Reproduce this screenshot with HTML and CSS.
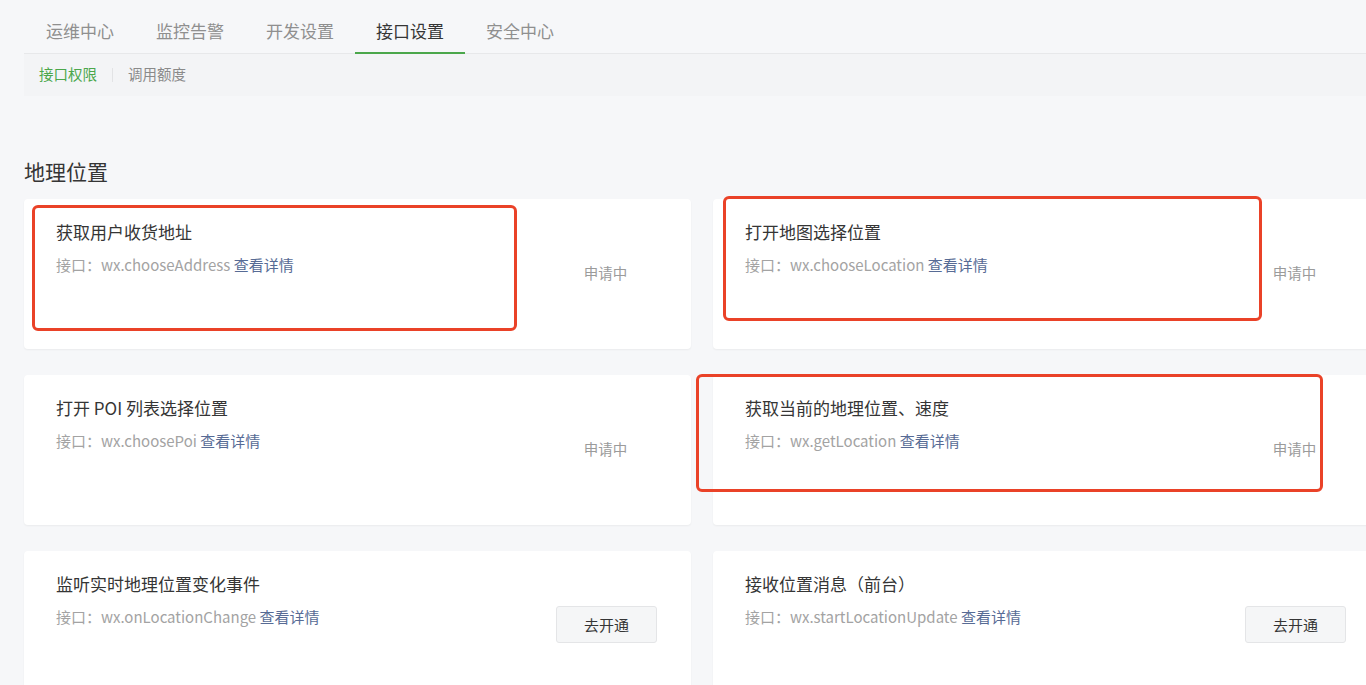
FILE: index.html
```html
<!DOCTYPE html>
<html lang="zh-CN">
<head>
<meta charset="utf-8">
<title>接口设置</title>
<link rel="stylesheet" href="styles.css">
</head>
<body>
<div class="page">
  <nav class="tabs">
    <a class="tab">运维中心</a>
    <a class="tab">监控告警</a>
    <a class="tab">开发设置</a>
    <a class="tab active">接口设置</a>
    <a class="tab">安全中心</a>
  </nav>
  <div class="subnav">
    <a class="sub active">接口权限</a>
    <span class="sep"></span>
    <a class="sub">调用额度</a>
  </div>
  <h2 class="section-title">地理位置</h2>
  <div class="grid">
    <div class="card">
      <div class="info">
        <div class="title">获取用户收货地址</div>
        <div class="desc">接口：wx.chooseAddress <a class="link">查看详情</a></div>
      </div>
      <div class="action"><span class="status">申请中</span></div>
    </div>
    <div class="card">
      <div class="info">
        <div class="title">打开地图选择位置</div>
        <div class="desc">接口：wx.chooseLocation <a class="link">查看详情</a></div>
      </div>
      <div class="action"><span class="status">申请中</span></div>
    </div>
    <div class="card">
      <div class="info">
        <div class="title">打开 POI 列表选择位置</div>
        <div class="desc">接口：wx.choosePoi <a class="link">查看详情</a></div>
      </div>
      <div class="action"><span class="status">申请中</span></div>
    </div>
    <div class="card">
      <div class="info">
        <div class="title">获取当前的地理位置、速度</div>
        <div class="desc">接口：wx.getLocation <a class="link">查看详情</a></div>
      </div>
      <div class="action"><span class="status">申请中</span></div>
    </div>
    <div class="card">
      <div class="info">
        <div class="title">监听实时地理位置变化事件</div>
        <div class="desc">接口：wx.onLocationChange <a class="link">查看详情</a></div>
      </div>
      <div class="action"><button class="btn">去开通</button></div>
    </div>
    <div class="card">
      <div class="info">
        <div class="title">接收位置消息（前台）</div>
        <div class="desc">接口：wx.startLocationUpdate <a class="link">查看详情</a></div>
      </div>
      <div class="action"><button class="btn">去开通</button></div>
    </div>
  </div>
  <div class="mark mark-1"></div>
  <div class="mark mark-2"></div>
  <div class="mark mark-3"></div>
</div>
</body>
</html>
```
FILE: styles.css
```css
html, body {
  margin: 0;
  padding: 0;
  background: #f6f7f9;
  overflow: hidden;
}
body {
  font-family: "Noto Sans CJK SC", "Noto Sans", sans-serif;
  color: #353535;
}
.page {
  position: relative;
  width: 1356px;
  padding-left: 24px;
  min-height: 685px;
}
.tabs {
  display: flex;
  height: 53px;
  border-bottom: 1px solid #e7e8ea;
}
.tab {
  width: 110px;
  text-align: center;
  font-size: 17px;
  line-height: 22px;
  padding-top: 20px;
  box-sizing: border-box;
  color: #8f8f8f;
  cursor: pointer;
}
.tab:first-child {
  margin-left: 1px;
}
.tab.active {
  color: #353535;
  border-bottom: 2px solid #4ba74b;
  margin-bottom: -1px;
}
.subnav {
  display: flex;
  align-items: center;
  height: 42px;
  background: #f3f4f6;
  padding-left: 15px;
}
.sub {
  font-size: 14.5px;
  line-height: 20px;
  color: #8a8a8a;
  margin-top: -2px;
}
.sub.active {
  color: #4ba74b;
}
.sep {
  width: 1px;
  height: 14px;
  background: #e2e3e5;
  margin: 0 15px;
}
.section-title {
  margin: 0;
  padding-top: 62px;
  padding-bottom: 2px;
  font-size: 21px;
  font-weight: normal;
  line-height: 26px;
  color: #353535;
}
.grid {
  display: grid;
  grid-template-columns: 667px 667px;
  column-gap: 22px;
  row-gap: 26px;
  margin-top: 13px;
}
.card {
  display: flex;
  height: 150px;
  background: #fff;
  border-radius: 4px;
  box-shadow: 0 1px 2px rgba(0, 0, 0, 0.05);
}
.info {
  flex: 1;
  padding: 22px 0 0 32px;
}
.title {
  font-size: 17px;
  line-height: 22px;
  color: #353535;
}
.desc {
  margin-top: 12px;
  font-size: 15px;
  line-height: 20px;
  color: #a3a3a3;
}
.link {
  color: #576b95;
  cursor: pointer;
}
.action {
  width: 101px;
  margin-right: 34px;
  padding-bottom: 3px;
  display: flex;
  align-items: center;
  justify-content: center;
}
.status {
  font-size: 14.5px;
  color: #9b9b9b;
  margin-left: -2px;
}
.btn {
  width: 101px;
  height: 37px;
  font-family: inherit;
  font-size: 15px;
  color: #353535;
  background: #f5f6f7;
  border: 1px solid #e4e5e7;
  border-radius: 3px;
  cursor: pointer;
}
.mark {
  position: absolute;
  border: 3px solid #ea4228;
  border-radius: 6px;
  box-sizing: border-box;
  pointer-events: none;
}
.mark-1 { left: 32px; top: 205px; width: 485px; height: 126px; }
.mark-2 { left: 723px; top: 196px; width: 539px; height: 125px; }
.mark-3 { left: 696px; top: 374px; width: 627px; height: 118px; }
```
